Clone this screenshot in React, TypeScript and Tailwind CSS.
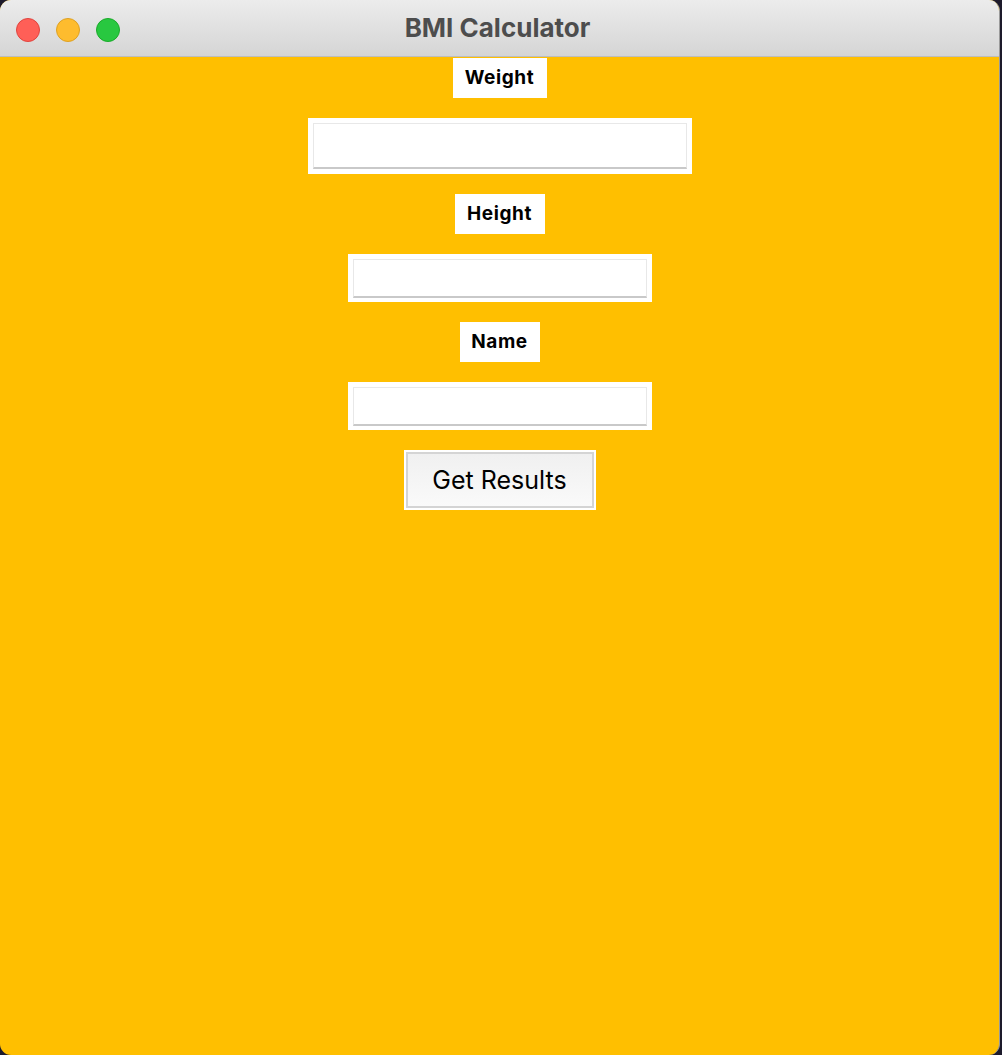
import React from "react";

const labels = [
  { text: "Weight", width: "w-[94px]" },
  { text: "Height", width: "w-[90px]" },
  { text: "Name", width: "w-[80px]" },
];

function Label({ text, width }: { text: string; width: string }) {
  return (
    <div
      className={`${width} h-[40px] bg-white flex items-center justify-center text-[19px] font-bold tracking-[0.6px] text-black`}
    >
      {text}
    </div>
  );
}

function Field({ wide }: { wide?: boolean }) {
  return (
    <div
      className={`bg-white ${
        wide ? "w-[384px] h-[56px] pt-[5px] pb-[5px]" : "w-[304px] h-[48px] pt-[5px] pb-[4px]"
      } px-[5px]`}
    >
      <input
        className="w-full h-full bg-white border border-[#e8e8e8] border-b-2 border-b-[#c9c9c9] outline-none"
        type="text"
      />
    </div>
  );
}

export default function App() {
  return (
    <div className="w-[1002px] h-[1055px] bg-[#1d1a2b] font-['Inter','Liberation_Sans',sans-serif]">
      <div className="w-[1000px] h-[1055px] rounded-[11px] overflow-hidden flex flex-col bg-[#ffbf00] border-r border-[#9a9a9a]">
        {/* Title bar */}
        <div className="relative h-[57px] shrink-0 bg-gradient-to-b from-[#ececec] to-[#d5d5d5] border-b border-[#bdbdbd] flex items-center justify-center">
          <div className="absolute left-[16px] top-[18px] flex gap-[16px]">
            <span className="w-[24px] h-[24px] rounded-full bg-[#ff5f57] border border-[#e0443e]" />
            <span className="w-[24px] h-[24px] rounded-full bg-[#febc2e] border border-[#dea123]" />
            <span className="w-[24px] h-[24px] rounded-full bg-[#28c840] border border-[#1aab29]" />
          </div>
          <h1 className="text-[26px] font-bold text-[#4d4d4d] -mt-[1px] -ml-[4px]">BMI Calculator</h1>
        </div>

        {/* Form */}
        <div className="flex flex-col items-center gap-5 pt-[1px]">
          <Label {...labels[0]} />
          <Field wide />
          <Label {...labels[1]} />
          <Field />
          <Label {...labels[2]} />
          <Field />
          <div className="w-[192px] h-[60px] bg-white p-[2px]">
            <button className="w-full h-full border-2 border-[#d4d4d4] bg-gradient-to-b from-[#f0f0f0] to-[#fafafa] text-[25px] text-[#000] leading-none">
              Get Results
            </button>
          </div>
        </div>
      </div>
    </div>
  );
}
